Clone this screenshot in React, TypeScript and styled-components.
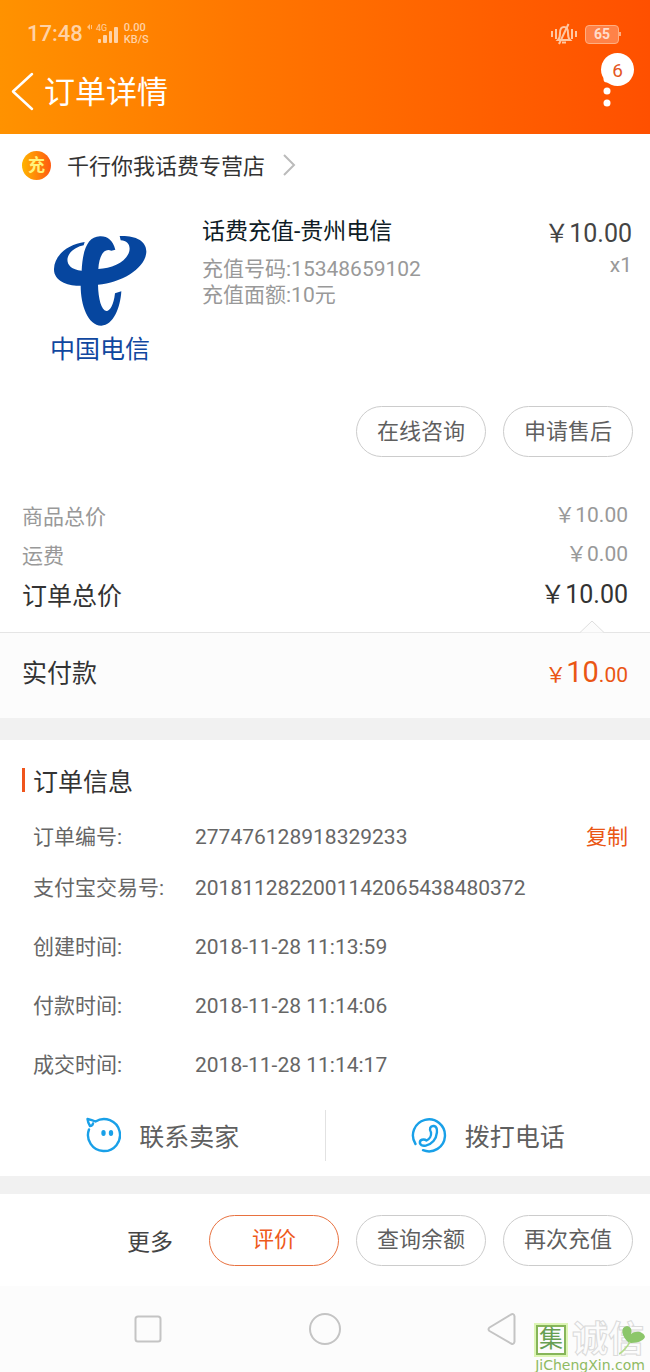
import React from 'react';
import styled, { createGlobalStyle } from 'styled-components';

const GlobalStyle = createGlobalStyle`
  *, *::before, *::after { box-sizing: border-box; }
  body {
    margin: 0;
    background: #fff;
    color: #333;
    font-family: Roboto, "Noto Sans CJK SC", sans-serif;
  }
  button { font-family: inherit; cursor: pointer; }
  svg { display: block; flex: none; }
`;

const Page = styled.div`
  position: relative;
  display: flex;
  flex-direction: column;
`;

const Header = styled.header`
  background: linear-gradient(90deg, #ff9200 0%, #ff7600 38%, #ff5000 100%);
  color: #fff;
`;

const StatusBar = styled.div`
  display: flex;
  align-items: center;
  height: 68px;
  padding: 0 29px 0 27px;
  color: #ffd2a6;
`;

const Clock = styled.span`
  font-size: 22px;
  font-weight: 500;
  line-height: 24px;
  margin-right: 4px;
`;

const Speed = styled.span`
  margin-left: 5px;
  margin-right: auto;
  font-size: 11px;
  font-weight: 500;
  line-height: 12px;
`;

const Battery = styled.span`
  display: flex;
  align-items: center;
  justify-content: center;
  width: 34px;
  height: 19px;
  margin-left: 7px;
  border: 1px solid #ffae80;
  border-radius: 4px;
  background: #ff8248;
  color: #ffdccb;
  font-size: 14px;
  font-weight: 700;
`;

const BatteryTip = styled.span`
  width: 2px;
  height: 4px;
  background: #ffae80;
`;

const NavBar = styled.div`
  display: flex;
  align-items: center;
  height: 66px;
  padding: 0 36px 18px 10px;
`;

const IconButton = styled.button`
  display: flex;
  padding: 0;
  border: 0;
  background: none;
  color: inherit;
`;

const Title = styled.h1`
  flex: 1;
  margin: 0 0 0 9px;
  padding-top: 2px;
  font-size: 31px;
  font-weight: 400;
  line-height: 46px;
`;

const MoreButton = styled(IconButton)`
  position: relative;
  justify-content: center;
  width: 14px;
`;

const Badge = styled.span`
  position: absolute;
  left: 1px;
  top: -23px;
  width: 33px;
  height: 33px;
  border-radius: 17px;
  background: #fff;
  color: #e4571f;
  font-size: 19px;
  line-height: 35px;
  text-align: center;
`;

const Shop = styled.a`
  display: flex;
  align-items: center;
  height: 62px;
  padding: 0 22px;
  color: #333;
  font-size: 22px;
  text-decoration: none;
`;

const ShopBadge = styled.span`
  width: 29px;
  height: 29px;
  margin-right: 16px;
  border-radius: 50%;
  background: linear-gradient(90deg, #ffb400, #ff5a10);
  color: #fff27a;
  font-size: 17px;
  font-weight: 700;
  line-height: 28px;
  text-align: center;
`;

const ShopName = styled.span`
  margin-right: 18px;
  padding-bottom: 2px;
`;

const Product = styled.section`
  display: flex;
  padding: 20px 18px 0 22px;
`;

const Thumb = styled.figure`
  display: flex;
  flex-direction: column;
  align-items: center;
  width: 156px;
  margin: 0 24px 0 0;
  padding-top: 19px;
`;

const Brand = styled.figcaption`
  margin-top: 8px;
  color: #10479f;
  font-size: 25px;
  line-height: 30px;
`;

const Details = styled.div`
  flex: 1;
`;

const ProductName = styled.h2`
  margin: 0 0 8px;
  color: #0f1c26;
  font-size: 23px;
  font-weight: 400;
  line-height: 32px;
`;

const Note = styled.p`
  margin: 0;
  color: #999;
  font-size: 21px;
  line-height: 26px;
`;

const Price = styled.div`
  color: #444;
  font-size: 25px;
  line-height: 36px;
  text-align: right;
`;

const Actions = styled.div`
  display: flex;
  align-items: center;
  justify-content: flex-end;
  gap: 17px;
  padding: 0 17px;
`;

const ProductActions = styled(Actions)`
  padding-top: 41px;
  padding-bottom: 40px;
`;

const Pill = styled.button<{ $primary?: boolean }>`
  width: 130px;
  height: 51px;
  padding: 0;
  border: 1px solid ${(p) => (p.$primary ? '#e8713f' : '#ccc')};
  border-radius: 26px;
  background: #fff;
  color: ${(p) => (p.$primary ? '#ee5a1c' : '#5f5f5f')};
  font-size: 22px;
  line-height: 30px;
`;

const Totals = styled.dl`
  margin: 0;
  padding: 0 22px 13px;
`;

const TotalRow = styled.div<{ $strong?: boolean }>`
  display: flex;
  align-items: center;
  justify-content: space-between;
  height: ${(p) => (p.$strong ? 44 : 39)}px;
  color: ${(p) => (p.$strong ? '#333' : '#999')};
  font-size: ${(p) => (p.$strong ? 25 : 21)}px;
  line-height: 36px;
`;

const Term = styled.dt`
  margin: 0;
`;

const Amount = styled.dd`
  margin: 0;
  padding-bottom: 4px;
`;

const Paid = styled.section`
  position: relative;
  display: flex;
  align-items: center;
  justify-content: space-between;
  height: 86px;
  padding: 0 22px 4px;
  border-top: 1px solid #e5e5e5;
  background: #fcfcfc;
  font-size: 25px;
  line-height: 36px;
`;

const Notch = styled.svg`
  position: absolute;
  right: 46px;
  top: -13px;
`;

const PaidAmount = styled.span`
  color: #ea5614;
  font-size: 21px;
`;

const Big = styled.span`
  font-size: 29px;
`;

const Band = styled.div<{ $slim?: boolean }>`
  height: ${(p) => (p.$slim ? 18 : 22)}px;
  background: #f1f1f1;
`;

const Info = styled.section`
  padding: 0 22px;
`;

const InfoTitle = styled.h2`
  display: flex;
  align-items: center;
  gap: 8px;
  height: 76px;
  margin: 0;
  padding-top: 4px;
  color: #333;
  font-size: 25px;
  font-weight: 400;

  &::before {
    content: '';
    width: 3px;
    height: 24px;
    background: #f0551c;
  }
`;

const InfoList = styled.dl`
  margin: 0;
  padding-left: 11px;
`;

const InfoRow = styled.div<{ $first?: boolean }>`
  display: flex;
  align-items: center;
  height: ${(p) => (p.$first ? 42 : 59)}px;
  color: #666;
  font-size: 21px;
  line-height: 30px;
`;

const InfoLabel = styled.dt`
  width: 162px;
`;

const InfoValue = styled.dd`
  flex: 1;
  margin: 0;
`;

const CopyButton = styled.button`
  padding: 0;
  border: 0;
  background: none;
  color: #ea5614;
  font-size: 21px;
  line-height: 28px;
`;

const Contact = styled.div`
  display: flex;
  align-items: center;
  height: 82px;
`;

const ContactButton = styled.button`
  display: flex;
  flex: 1;
  align-items: center;
  justify-content: center;
  gap: 18px;
  height: 51px;
  padding: 0;
  border: 0;
  background: none;
  color: #5f5f5f;
  font-size: 25px;

  & + & {
    border-left: 1px solid #e2e2e2;
  }
`;

const Footer = styled(Actions)`
  height: 92px;
`;

const MoreLink = styled.button`
  margin-right: 19px;
  padding: 0;
  border: 0;
  background: none;
  color: #444;
  font-size: 23px;
`;

const SystemNav = styled.nav`
  display: flex;
  align-items: center;
  justify-content: center;
  gap: 145px;
  height: 86px;
  background: #fcfcfc;
  color: #c4c4c4;
`;

const Watermark = styled.div`
  position: absolute;
  right: 0;
  bottom: 0;
  width: 120px;
  color: #8fba62;
`;

const MarkRow = styled.div`
  display: flex;
  align-items: center;
  height: 36px;
  padding-left: 6px;
`;

const MarkBox = styled.span`
  width: 30px;
  height: 30px;
  margin-right: 6px;
  border: 2px solid #86b559;
  outline: 2px solid #dcf5b4;
  color: #679f52;
  font-size: 24px;
  line-height: 24px;
  text-align: center;
`;

const MarkOutline = styled.span`
  color: #fcfcfc;
  font-size: 36px;
  font-weight: 700;
  line-height: 30px;
  -webkit-text-stroke: 1px #dadada;
`;

const Leaf = styled.svg`
  position: absolute;
  right: 3px;
  top: 2px;
`;

const MarkUrl = styled.div`
  font-family: "DejaVu Sans", sans-serif;
  font-size: 14px;
  line-height: 14px;
  text-align: center;
`;

const Signal = () => (
  <svg width="32" height="22" viewBox="0 0 32 22" fill="currentColor">
    <path d="M3 1 L0 4 L3 7Z M4 2h1v4h-1z" opacity=".8" />
    <text x="9" y="8" fontSize="9" fontFamily="Roboto, sans-serif">4G</text>
    <rect x="11" y="16" width="3" height="4" rx="1" />
    <rect x="16" y="12" width="4" height="8" rx="1" />
    <rect x="22" y="8" width="3" height="12" rx="1" />
    <rect x="27" y="4" width="4" height="16" rx="1" />
  </svg>
);

const MutedBell = () => (
  <svg width="28" height="22" viewBox="0 0 28 22" fill="none" stroke="#ffc7a2" strokeWidth="2">
    <path d="M2 8v6M6 6v10M22 6v10M26 8v6" />
    <path d="M8 17h12c-2-2-2-4-2-7 0-4-1.500-6-4-6s-4 2-4 6c0 3 0 5-2 7zM12 19.500h4" />
    <path d="M18.500 1 9 21" />
  </svg>
);

const TelecomLogo = () => (
  <svg width="96" height="92" viewBox="156 106 288 276" fill="#06469f" role="img" aria-label="中国电信">
    <path d="M346 150C338 121 322 109 300 110C263 111 248 150 245 213C203 209 195 183 208 163C217 149 236 140 251 137L254 127C207 133 163 165 162 208C161 244 205 260 242 258C242 315 263 377 304 378C340 377 361 325 364 275L345 281C341 318 329 335 319 334C304 331 295 298 294 255C366 249 436 206 439 157C440 122 404 107 359 109L362 122C385 122 394 141 386 161C373 191 333 206 295 208C297 169 312 143 334 153Z" />
  </svg>
);

const ChatIcon = () => (
  <svg width="36" height="36" viewBox="0 0 36 36" fill="none" stroke="#19a0e8" strokeWidth="2.400" strokeLinecap="round" strokeLinejoin="round">
    <path d="M4 12.500A16 16 0 1 0 10.500 4.500Q7 3 2.500 2Q3 6 5 9Q7.500 9 8 6.500" />
    <ellipse cx="18.500" cy="16" rx="1.200" ry="2" fill="#19a0e8" strokeWidth="2" />
    <ellipse cx="26" cy="16" rx="1.200" ry="2" fill="#19a0e8" strokeWidth="2" />
  </svg>
);

const PhoneIcon = () => (
  <svg width="36" height="36" viewBox="0 0 36 36" fill="none" stroke="#19a0e8" strokeWidth="2.400" strokeLinecap="round" strokeLinejoin="round">
    <path d="M4.500 27A16 16 0 1 1 12 33.200" />
    <path d="M20 15.500C18 12 19 8.500 23 9C28 10 26 20 22.500 24C18 29 11 30.500 9 26.500C8 22.500 13 21.500 15.500 23.500C18.500 22 20.500 18.500 20 15.500Z" />
  </svg>
);

const orderInfo = [
  { label: '订单编号:', value: '277476128918329233', copy: true },
  { label: '支付宝交易号:', value: '2018112822001142065438480372' },
  { label: '创建时间:', value: '2018-11-28 11:13:59' },
  { label: '付款时间:', value: '2018-11-28 11:14:06' },
  { label: '成交时间:', value: '2018-11-28 11:14:17' },
];

const totals = [
  { label: '商品总价', value: '￥10.00' },
  { label: '运费', value: '￥0.00' },
  { label: '订单总价', value: '￥10.00', strong: true },
];

export default function App() {
  return (
    <Page>
      <GlobalStyle />
      <Header>
        <StatusBar>
          <Clock>17:48</Clock>
          <Signal />
          <Speed>0.00<br />KB/S</Speed>
          <MutedBell />
          <Battery>65</Battery>
          <BatteryTip />
        </StatusBar>
        <NavBar>
          <IconButton aria-label="返回">
            <svg width="25" height="40" viewBox="0 0 25 40" fill="none" stroke="currentColor" strokeWidth="2.500" strokeLinecap="round" strokeLinejoin="round">
              <path d="M22 2 3 19.500 22 37" />
            </svg>
          </IconButton>
          <Title>订单详情</Title>
          <MoreButton aria-label="更多选项">
            <svg width="14" height="32" viewBox="0 0 14 32" fill="currentColor">
              <circle cx="7" cy="3" r="3.500" />
              <circle cx="7" cy="15" r="3.500" />
              <circle cx="7" cy="27" r="3.500" />
            </svg>
            <Badge>6</Badge>
          </MoreButton>
        </NavBar>
      </Header>

      <Shop href="#shop">
        <ShopBadge>充</ShopBadge>
        <ShopName>千行你我话费专营店</ShopName>
        <svg width="13" height="22" viewBox="0 0 13 22" fill="none" stroke="#bbb" strokeWidth="2">
          <path d="M1 1 11 11 1 21" />
        </svg>
      </Shop>

      <Product>
        <Thumb>
          <TelecomLogo />
          <Brand>中国电信</Brand>
        </Thumb>
        <Details>
          <ProductName>话费充值-贵州电信</ProductName>
          <Note>充值号码:15348659102</Note>
          <Note>充值面额:10元</Note>
        </Details>
        <Price>
          ￥10.00
          <Note>x1</Note>
        </Price>
      </Product>
      <ProductActions>
        <Pill>在线咨询</Pill>
        <Pill>申请售后</Pill>
      </ProductActions>

      <Totals>
        {totals.map((t) => (
          <TotalRow key={t.label} $strong={t.strong}>
            <Term>{t.label}</Term>
            <Amount>{t.value}</Amount>
          </TotalRow>
        ))}
      </Totals>
      <Paid>
        <Notch width="24" height="14" viewBox="0 0 24 14" fill="#fcfcfc" stroke="#dedede">
          <path d="M0 12.500 12 1 24 12.500" />
        </Notch>
        <span>实付款</span>
        <PaidAmount>￥<Big>10</Big>.00</PaidAmount>
      </Paid>
      <Band />

      <Info>
        <InfoTitle>订单信息</InfoTitle>
        <InfoList>
          {orderInfo.map((row) => (
            <InfoRow key={row.label} $first={row.copy}>
              <InfoLabel>{row.label}</InfoLabel>
              <InfoValue>{row.value}</InfoValue>
              {row.copy && <CopyButton>复制</CopyButton>}
            </InfoRow>
          ))}
        </InfoList>
      </Info>
      <Contact>
        <ContactButton><ChatIcon />联系卖家</ContactButton>
        <ContactButton><PhoneIcon />拨打电话</ContactButton>
      </Contact>
      <Band $slim />

      <Footer>
        <MoreLink>更多</MoreLink>
        <Pill $primary>评价</Pill>
        <Pill>查询余额</Pill>
        <Pill>再次充值</Pill>
      </Footer>
      <SystemNav aria-label="系统导航">
        <IconButton aria-label="最近任务">
          <svg width="32" height="32" viewBox="0 0 32 32" fill="none" stroke="currentColor" strokeWidth="2">
            <rect x="3.500" y="3.500" width="25" height="25" rx="2.500" />
          </svg>
        </IconButton>
        <IconButton aria-label="主页">
          <svg width="32" height="32" viewBox="0 0 32 32" fill="none" stroke="currentColor" strokeWidth="2">
            <circle cx="16" cy="16" r="15" />
          </svg>
        </IconButton>
        <IconButton aria-label="后退">
          <svg width="32" height="32" viewBox="0 0 32 32" fill="none" stroke="currentColor" strokeWidth="2" strokeLinejoin="round">
            <path d="M3.500 14.500 25 1.500Q28 0 28.500 3.500V28.500Q28 32 25 30.500L3.500 18Q1.500 16 3.500 14.500Z" />
          </svg>
        </IconButton>
      </SystemNav>
      <Watermark>
        <MarkRow>
          <MarkBox>集</MarkBox>
          <MarkOutline>诚信</MarkOutline>
        </MarkRow>
        <Leaf width="28" height="32" viewBox="0 0 28 32">
          <path d="M10 19C2 12 1 3 8 2C13 3 13 7 12 10C17 6 25 8 26 13C24 18 16 19 10 19Z" fill="#8cc66a" />
          <path d="M11 18C8 23 5 27 0 30" fill="none" stroke="#b5dc8c" strokeWidth="1.500" />
        </Leaf>
        <MarkUrl>JiChengXin.com</MarkUrl>
      </Watermark>
    </Page>
  );
}
